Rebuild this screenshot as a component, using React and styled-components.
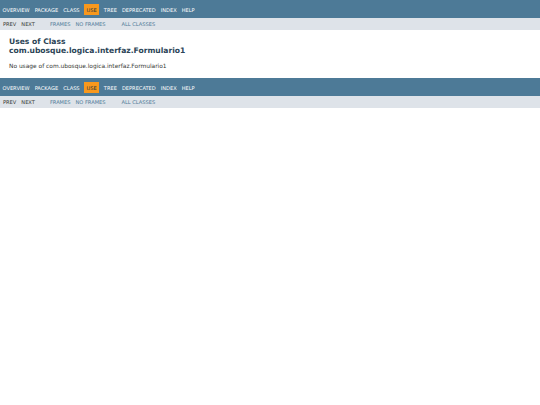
import React from 'react'
import styled, { createGlobalStyle } from 'styled-components'

const GlobalStyle = createGlobalStyle`
  html, body {
    margin: 0;
    padding: 0;
    background: #fff;
  }
  body {
    font-family: 'DejaVu Sans', 'Liberation Sans', Arial, sans-serif;
    font-size: 6px;
    color: #353833;
  }
`;

const topLinks = ['Overview', 'Package', 'Class', 'Use', 'Tree', 'Deprecated', 'Index', 'Help']

const TopNav = styled.nav`
  display: flex;
  align-items: center;
  box-sizing: border-box;
  height: 18px;
  padding: 1px 0 0 0;
  background: #4d7a97;
  font-size: 5.1px;
  text-transform: uppercase;
`;

const NavItem = styled.span`
  display: flex;
  align-items: center;
  height: 11px;
  padding: 0 2.5px;
  margin: ${p => (p.$active ? '0 2px' : '0')};
  background: ${p => (p.$active ? '#f8981d' : 'transparent')};
  color: ${p => (p.$active ? '#253441' : '#fff')};
`;

const SubNav = styled.div`
  display: flex;
  align-items: center;
  box-sizing: border-box;
  height: 12px;
  padding: 0 0 0 3px;
  background: #dee3e9;
  font-size: 5.1px;
  text-transform: uppercase;
`;

const SubGroup = styled.div`
  display: flex;
  gap: 5px;
  margin-right: ${p => p.$gap || 0}px;
`;

const SubLink = styled.span`
  color: ${p => (p.$link ? '#4d7a97' : '#353833')};
`;

const Header = styled.header`
  padding: 7px 9px 0;
`;

const Title = styled.h2`
  margin: 0;
  font-size: 7.6px;
  line-height: 9px;
  font-weight: bold;
  color: #2c4557;
`;

const Body = styled.div`
  padding: 8px 9px 9px;
  font-size: 5.9px;
  color: #353833;
`;

const NavBlock = () => (
  <>
    <TopNav>
      {topLinks.map(l => (
        <NavItem key={l} $active={l === 'Use'}>{l}</NavItem>
      ))}
    </TopNav>
    <SubNav>
      <SubGroup $gap={15}>
        <SubLink>Prev</SubLink>
        <SubLink>Next</SubLink>
      </SubGroup>
      <SubGroup $gap={16}>
        <SubLink $link>Frames</SubLink>
        <SubLink $link>No Frames</SubLink>
      </SubGroup>
      <SubGroup>
        <SubLink $link>All Classes</SubLink>
      </SubGroup>
    </SubNav>
  </>
)

export default function App() {
  return (
    <>
      <GlobalStyle />
      <NavBlock />
      <Header>
        <Title>Uses of Class<br />com.ubosque.logica.interfaz.Formulario1</Title>
      </Header>
      <Body>No usage of com.ubosque.logica.interfaz.Formulario1</Body>
      <NavBlock />
    </>
  )
}
